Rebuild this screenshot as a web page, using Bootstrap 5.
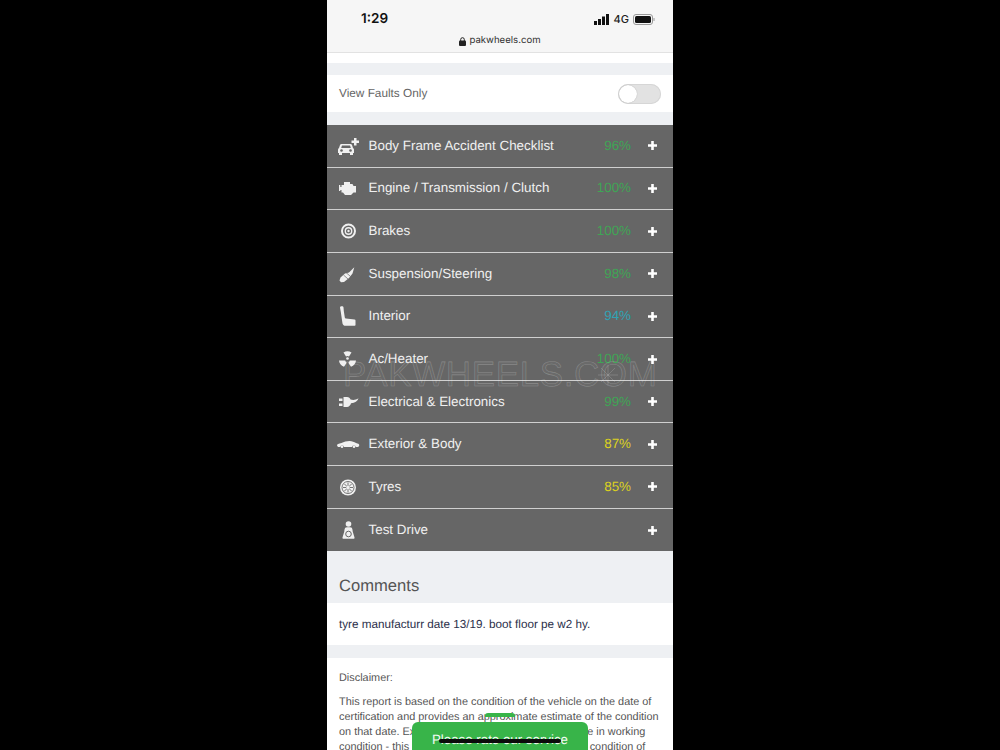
<!DOCTYPE html>
<html lang="en">
<head>
  <meta charset="UTF-8" />
  <meta name="viewport" content="width=device-width, initial-scale=1" />
  <title>Inspection Report - PakWheels</title>
  <link href="https://cdn.jsdelivr.net/npm/bootstrap@5.3.0/dist/css/bootstrap.min.css" rel="stylesheet" />
  <style>
    html, body { height: 100%; overflow: hidden; background: #000; }
    body { font-family: "Liberation Sans", Arial, sans-serif; text-rendering: geometricPrecision; }
    .phone { position: relative; width: 346px; height: 750px; margin-left: 327px; background: #eef0f3; overflow: hidden; }
    .top-bar { height: 53px; background: #f6f6f6; border-bottom: 1px solid #e2e2e2; position: relative; }
    .clock { font-family: Inter, sans-serif; font-weight: 600; font-size: 13.5px; color: #111; line-height: 18px; padding-top: 10px; padding-left: 34px; }
    .signal { position: absolute; top: 13px; right: 18px; gap: 4px; font-family: Inter, sans-serif; font-weight: 500; font-size: 11px; line-height: 12px; color: #222; }
    .url-line { font-family: Inter, sans-serif; font-size: 9.6px; color: #333; line-height: 14px; padding-top: 6px; gap: 3px; }
    .white-gap { height: 10px; background: #fff; }
    .grey-gap { height: 12px; }
    .faults { height: 37px; background: #fff; padding: 0 12px 0 12px; color: #666; font-size: 11.8px; }
    .faults-label { padding-top: 1px; }
    .switch-off { width: 43px; height: 20px; margin-top: 1px; border-radius: 10px; background: #e2e2e2; position: relative; box-shadow: inset 0 0 0 1px #d6d6d6; }
    .switch-off span { position: absolute; left: 1px; top: 1px; width: 18px; height: 18px; border-radius: 50%; background: #fff; box-shadow: 0 0 1px rgba(0,0,0,.3); }
    .report-list { margin-top: 1px; }
    .report-row { height: 42.65px; background: #666; border-bottom: 1px solid #d0d0d0; color: #f0f0f0; font-size: 13.4px; padding-left: 10px; padding-right: 16.5px; }
    .report-row:last-child { border-bottom: 0; }
    .row-icon { width: 24px; height: 24px; flex: none; margin-right: 7.500px; }
    .row-name { flex: 1; }
    .row-pct { font-size: 13.4px; margin-right: 16.5px; }
    .pct-green { color: #3fa555; }
    .pct-blue { color: #2fa3b5; }
    .pct-yellow { color: #dcd21e; }
    .plus-sign { width: 9px; height: 9px; flex: none; }
    .watermark { position: absolute; left: 16px; top: 356px; font-size: 35px; line-height: 38px; letter-spacing: .6px; color: rgba(255,255,255,.04); -webkit-text-stroke: .6px rgba(255,255,255,.22); white-space: nowrap; pointer-events: none; }
    .watermark-wheel { position: absolute; left: 268px; top: 362px; width: 26px; height: 26px; pointer-events: none; }
    .comments-head { height: 52px; padding: 25px 12px 0; font-size: 16.600px; line-height: 20px; color: #555; }
    .comment-box { height: 42px; background: #fff; padding: 1px 12px 0; font-size: 11.7px; color: #2b2f4a; }
    .disclaimer { background: #fff; margin-top: 13px; padding: 13px 12px 0; font-size: 10.9px; line-height: 15px; color: #555; height: 200px; }
    .disclaimer p { margin: 0 0 9px; }
    .rate-btn { position: absolute; left: 85px; top: 722px; width: 176px; height: 28px; background: #38b449; border-radius: 6px 6px 0 0; color: #f2fbf3; font-size: 13.3px; padding-top: 8px; text-align: center; line-height: 20px; }
    .rate-tab { position: absolute; left: 158px; top: 713px; width: 30px; height: 4px; background: #38b449; border-radius: 3px 3px 0 0; }
    .scribble { position: absolute; left: 112px; top: 739px; width: 122px; height: 4px; background: #0b0b0b; border-radius: 2px; }
  </style>
</head>
<body>

  <div class="phone">
    <div class="top-bar">
      <div class="clock">1:29</div>
      <div class="signal d-flex align-items-center">
        <svg width="16" height="11" viewBox="0 0 16 11"><rect x="0" y="7" width="3" height="4" fill="#111"/><rect x="4" y="5" width="3" height="6" fill="#111"/><rect x="8" y="2.500" width="3" height="8.500" fill="#111"/><rect x="12" y="0" width="3" height="11" fill="#111"/></svg>
        <span>4G</span>
        <svg width="22" height="11" viewBox="0 0 22 11"><rect x=".5" y=".5" width="19" height="10" rx="2.500" fill="none" stroke="#999"/><rect x="2" y="2" width="16" height="7" rx="1.500" fill="#111"/><rect x="20.500" y="4" width="1" height="3" fill="#999"/></svg>
      </div>
      <div class="url-line d-flex justify-content-center align-items-center">
        <svg width="7" height="9" viewBox="0 0 7 9"><rect x="0" y="3.500" width="7" height="5.500" rx="1" fill="#222"/><path d="M1.700 4V2.500a1.800 1.800 0 0 1 3.600 0V4" fill="none" stroke="#222"/></svg>
        <span>pakwheels.com</span>
      </div>
    </div>
    <div class="white-gap"></div>
    <div class="grey-gap"></div>
    <div class="faults d-flex align-items-center justify-content-between">
      <span class="faults-label">View Faults Only</span>
      <div class="switch-off"><span></span></div>
    </div>
    <div class="grey-gap"></div>

    <div class="report-list" id="reportList"></div>

    <div class="comments-head">Comments</div>
    <div class="comment-box d-flex align-items-center">tyre manufacturr date 13/19. boot floor pe w2 hy.</div>
    <div class="disclaimer">
      <p>Disclaimer:</p>
      <p>This report is based on the condition of the vehicle on the date of certification and provides an approximate estimate of the condition on that date. Except where noted, all parts should be in working condition - this report does not guarantee the future condition of</p>
    </div>

    <div class="watermark">PAKWHEELS.COM</div>
    <svg class="watermark-wheel" viewBox="0 0 26 26"><path d="M13 3v20M3 13h20M6 6l14 14M20 6L6 20" stroke="#fff" stroke-opacity=".16" stroke-width="1"/></svg>
    <div class="rate-tab"></div>
    <div class="rate-btn">Please rate our service</div>
    <div class="scribble"></div>
  </div>

  <script>
    const f = 'fill="#f0f0f0"';
    const g = 'fill="#666"';
    const icons = {
      car: `<path ${f} d="M4.500 10h9c.8 0 1.200.4 1.500 1l1 3c.7.4 1 1 1 1.800V19h-1v2h-3v-2H5v2H2v-2H1v-3.200c0-.8.3-1.400 1-1.800l1-3c.3-.6.7-1 1.500-1z"/><path ${g} d="M5 11.500h8l.8 2.500H4.200z"/><circle cx="4.500" cy="16.500" r="1.300" ${g}/><circle cx="13.500" cy="16.500" r="1.300" ${g}/><path ${f} d="M17 4h2.500v2.500H22V9h-2.500v2.500H17V9h-2.500V6.500H17z"/>`,
      engine: `<path ${f} d="M7 6h6v2h2.500l1 2H19v6.500h-2.500L14 19H8l-2-2.500H4.500V14H2v-3h2.500V9H7z"/><rect x="2" y="9" width="1.300" height="6" ${f}/>`,
      brakes: `<circle cx="11.500" cy="12" r="6.500" fill="none" stroke="#f0f0f0" stroke-width="2"/><circle cx="11.500" cy="12" r="3.200" fill="none" stroke="#f0f0f0" stroke-width="1.400"/><circle cx="11.500" cy="12" r="1.200" ${f}/>`,
      spark: `<path ${f} d="M17.300 5.300l-1.800 6.200-3.500 4.500-5 4-3 .3-1.500-1.800 1-3 4.500-4 4-1z"/><path d="M9 10.500l4.500 4M6.500 13l4.500 4" stroke="#666" stroke-width=".7"/>`,
      seat: `<path ${f} d="M3 3.500c0-.7.8-1.200 1.800-1.200S6.500 2.800 6.500 3.500l.3 3.500 1 6.500c.1.700.5 1 1.100 1.100l8.600 1c.7.100 1 .5 1 1V21c0 .5-.3.8-.8.8H8.500c-1.500 0-2.500-.8-3-2.300L3.800 8z"/>`,
      fan: `<circle cx="10.500" cy="11.500" r="1.300" ${f}/><path ${f} d="M6.500 5.500c2.500-1.800 5.500-1.800 8 0l-2.500 4a3 3 0 0 0-3 0z"/><path ${f} d="M2 13.500h6.200c.2 1 .8 1.700 1.500 2.200l-2.700 4C4 18.500 2.200 16.500 2 13.500z"/><path ${f} d="M19 13.500h-6.200c-.2 1-.8 1.700-1.500 2.200l2.700 4c3-1.200 4.800-3.200 5-6.200z"/>`,
      plug: `<rect x="2" y="8.500" width="3.500" height="2.500" ${f}/><rect x="2" y="13.500" width="3.500" height="2.500" ${f}/><path ${f} d="M6.500 7h3.500c2 0 3 1 3.500 2.500 3 .8 5.500.3 8-1.200-1 3-3.500 4.700-7.500 5-.5 2-2 3.700-4 3.700H6.500z"/>`,
      sedan: `<path ${f} d="M0 13.500c0-1.500 1.500-2 4.500-2.500C7 9.800 9.500 9 12.500 9c2.800 0 4.500 1.200 6.500 2 2 .5 3.300 1 3.300 2.300l-1 1.700h-2.500a2 2 0 0 0-3.800 0H7a2 2 0 0 0-3.800 0H1z"/><circle cx="5" cy="14.800" r="1.300" ${f}/><circle cx="17" cy="14.800" r="1.300" ${f}/>`,
      tyre: `<circle cx="11" cy="12.500" r="8" ${f}/><circle cx="11" cy="12.500" r="6" fill="none" stroke="#666" stroke-width=".9"/><path d="M11 7.500v10M6 12.500h10M7.500 9l7 7M14.500 9l-7 7" stroke="#666" stroke-width=".9"/><circle cx="11" cy="12.500" r="1.700" ${f}/>`,
      driver: `<circle cx="11.500" cy="6" r="2.800" ${f}/><path ${f} d="M8.700 9.500c1-.5 4.600-.5 5.600 0 1 .5 1.200 2 1.400 4l1.800 6c.2.800-.3 1.300-1 1.300H6.500c-.7 0-1.200-.5-1-1.300l1.800-6c.2-2 .4-3.500 1.400-4z"/><circle cx="11.500" cy="16" r="2.800" fill="none" stroke="#666" stroke-width="1"/>`
    };

    const rows = [
      { name: "Body Frame Accident Checklist", pct: "96%", tone: "green", icon: "car" },
      { name: "Engine / Transmission / Clutch", pct: "100%", tone: "green", icon: "engine" },
      { name: "Brakes", pct: "100%", tone: "green", icon: "brakes" },
      { name: "Suspension/Steering", pct: "98%", tone: "green", icon: "spark" },
      { name: "Interior", pct: "94%", tone: "blue", icon: "seat" },
      { name: "Ac/Heater", pct: "100%", tone: "green", icon: "fan" },
      { name: "Electrical & Electronics", pct: "99%", tone: "green", icon: "plug" },
      { name: "Exterior & Body", pct: "87%", tone: "yellow", icon: "sedan" },
      { name: "Tyres", pct: "85%", tone: "yellow", icon: "tyre" },
      { name: "Test Drive", pct: "", tone: "green", icon: "driver" }
    ];

    document.getElementById("reportList").innerHTML = rows.map(r => `
      <div class="report-row d-flex align-items-center">
        <svg class="row-icon" viewBox="0 0 24 24">${icons[r.icon]}</svg>
        <span class="row-name">${r.name.replace("&", "&amp;")}</span>
        <span class="row-pct pct-${r.tone}">${r.pct}</span>
        <svg class="plus-sign" viewBox="0 0 9 9"><path d="M3.200 0h2.600v3.200H9v2.600H5.800V9H3.200V5.800H0V3.200h3.200z" fill="#fff"/></svg>
      </div>`).join("");
  </script>

</body>
</html>
